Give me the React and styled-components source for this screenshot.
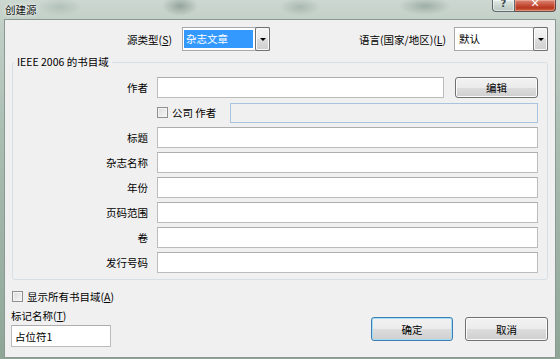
import React from 'react';
import styled, { createGlobalStyle, css } from 'styled-components';

const Global = createGlobalStyle`
  html, body { margin: 0; padding: 0; }
  body {
    font-family: "Noto Sans CJK SC", "Microsoft YaHei", sans-serif;
    font-size: 10.5px;
    color: #000;
  }
  * { box-sizing: border-box; }
`;

const Window = styled.div`
  width: 560px;
  height: 359px;
  display: flex;
  flex-direction: column;
  padding: 0 4px 1px 4px;
  overflow: hidden;
  background:
    radial-gradient(ellipse 22px 9px at 60px 7px, rgba(150, 170, 160, 0.45), transparent),
    radial-gradient(ellipse 18px 10px at 180px 6px, rgba(105, 125, 115, 0.55), transparent),
    radial-gradient(ellipse 20px 9px at 300px 7px, rgba(130, 150, 140, 0.45), transparent),
    radial-gradient(ellipse 26px 9px at 425px 6px, rgba(115, 135, 125, 0.5), transparent),
    linear-gradient(180deg, #ccd7d0 0%, #c2d0c7 6%, #a9bdb1 40%, #8fa697 100%);
`;

const TitleBar = styled.div`
  height: 19px;
  flex: none;
  display: flex;
  justify-content: space-between;
  align-items: flex-start;
`;

const Title = styled.div`
  padding-left: 1px;
  line-height: 19px;
  font-size: 10.5px;
  color: #111;
  text-shadow: 0 0 4px rgba(255, 255, 255, 0.9), 0 0 2px rgba(255, 255, 255, 0.8);
`;

const CaptionButtons = styled.div`
  display: flex;
`;

const CaptionButton = styled.div`
  height: 12px;
  display: flex;
  justify-content: center;
  overflow: hidden;
  border: 1px solid rgba(55, 65, 75, 0.75);
  border-top: none;
  font-family: "DejaVu Sans", sans-serif;
  font-weight: bold;
  line-height: 8px;
  ${p => p.$close ? css`
    width: 41px;
    border-left: none;
    border-radius: 0 0 4px 0;
    background: linear-gradient(180deg, #d98a79 0%, #c9503a 45%, #b83a22 70%, #d0643f 100%);
    color: #fff;
    font-size: 11px;
    box-shadow: inset 0 0 0 1px rgba(255, 200, 180, 0.45);
  ` : css`
    width: 23px;
    border-radius: 0 0 0 4px;
    background: linear-gradient(180deg, #e3ebe7 0%, #cbd7d1 50%, #b9c8c0 100%);
    color: #3b4a50;
    font-size: 10px;
    box-shadow: inset 0 0 0 1px rgba(255, 255, 255, 0.5);
  `}
`;

const Client = styled.div`
  flex: 1;
  display: flex;
  flex-direction: column;
  border: 1px solid #8a9793;
  background: #f0f0f0;
  padding-top: 7px;
`;

const TopRow = styled.div`
  display: flex;
  align-items: center;
  height: 24px;
  padding-right: 7px;
`;

const TopLabel = styled.div`
  text-align: right;
  white-space: nowrap;
  ${p => p.$grow ? css`flex: 1; margin-right: 8px;` : css`width: 167px; margin-right: 10px;`}
`;

const Combo = styled.div`
  width: ${p => p.$w}px;
  height: 24px;
  display: flex;
  padding: 1px;
  border: 1px solid #a7a9ad;
  background: #fff;
`;

const ComboText = styled.div`
  flex: 1;
  padding-left: 3px;
  line-height: 20px;
  ${p => p.$selected && css`
    background: #3399ff;
    color: #fff;
    margin: 1px 2px 1px 0;
    line-height: 18px;
    padding-left: 2px;
  `}
`;

const ComboArrow = styled.div`
  width: 15px;
  margin: -2px -2px -2px 0;
  border: 1px solid #707070;
  border-radius: 2px;
  background: linear-gradient(180deg, #f4f4f4 0%, #ebebeb 50%, #dddddd 50%, #cfcfcf 100%);
  box-shadow: inset 0 0 0 1px #fbfbfb;
  display: flex;
  align-items: center;
  justify-content: center;
  &::after {
    content: "";
    border-left: 3px solid transparent;
    border-right: 3px solid transparent;
    border-top: 3px solid #000;
  }
`;

const Group = styled.fieldset`
  margin: 3px 7px 0 7px;
  padding: 7px 9px 6px 0;
  border: 1px solid #d5dfe5;
  border-radius: 3px;
  min-width: 0;
`;

const Legend = styled.legend`
  padding: 0 3px;
  margin-left: 1px;
  line-height: 16px;
  font-size: 10.5px;
`;

const Fields = styled.div`
  display: grid;
  grid-template-columns: 144px 1fr 94px;
  grid-auto-rows: 21px;
  row-gap: 4px;
`;

const FieldLabel = styled.div`
  align-self: center;
  text-align: right;
  padding-right: 9px;
`;

const TextInput = styled.input`
  height: ${p => p.$h || 21}px;
  width: ${p => (p.$w ? `${p.$w}px` : '100%')};
  margin: 0;
  padding: 0 3px;
  font: inherit;
  color: #000;
  border: 1px solid #bcbcbc;
  border-top-color: #adadad;
  background: #fff;
  outline: none;
  ${p => p.disabled && css`
    background: #f0f0f0;
    border-color: #a9c4de;
  `}
`;

const SpanRow = styled.div`
  grid-column: 2 / 4;
  display: flex;
  align-items: center;
`;

const Check = styled.span`
  flex: none;
  width: 11px;
  height: 11px;
  border: 1px solid #8e8f8f;
  background: linear-gradient(135deg, #dcdcdc 0%, #f6f6f6 100%);
  box-shadow: inset 0 0 0 1px #f4f4f4;
`;

const CheckText = styled.span`
  margin-left: 4px;
  white-space: nowrap;
`;

const CompanyInput = styled(TextInput)`
  flex: 1;
  width: auto;
  height: 20px;
  margin-left: 14px;
`;

const Button = styled.button`
  width: ${p => p.$w || 82}px;
  height: ${p => p.$h || 24}px;
  margin: 0;
  padding: 0;
  font: inherit;
  color: #000;
  border: 1px solid #707070;
  border-radius: 3px;
  background: linear-gradient(180deg, #f2f2f2 0%, #ebebeb 50%, #dddddd 50%, #cfcfcf 100%);
  box-shadow: inset 0 0 0 1px #fcfcfc;
  ${p => p.$default && css`
    border-color: #3c7fb1;
    box-shadow: inset 0 0 0 1px #a6dcf6;
  `}
`;

const EditButton = styled(Button)`
  justify-self: end;
`;

const Footer = styled.div`
  flex: 1;
  display: flex;
  justify-content: space-between;
  align-items: flex-end;
  padding: 6px 7px 10px 6px;
`;

const FooterLeft = styled.div`
  display: flex;
  flex-direction: column;
`;

const CheckRow = styled.div`
  display: flex;
  align-items: center;
  height: 14px;
  margin-left: 1px;
`;

const TagLabel = styled.div`
  margin-top: 5px;
  line-height: 16px;
`;

const TagInput = styled(TextInput)`
  margin-top: 1px;
`;

const ButtonBar = styled.div`
  display: flex;
  gap: 12px;
  margin-bottom: 6px;
`;

const fields = ['标题', '杂志名称', '年份', '页码范围', '卷', '发行号码'];

export default function App() {
  return (
    <>
      <Global />
      <Window>
        <TitleBar>
          <Title>创建源</Title>
          <CaptionButtons>
            <CaptionButton>?</CaptionButton>
            <CaptionButton $close>✕</CaptionButton>
          </CaptionButtons>
        </TitleBar>
        <Client>
          <TopRow>
            <TopLabel>源类型(<u>S</u>)</TopLabel>
            <Combo $w={88}>
              <ComboText $selected>杂志文章</ComboText>
              <ComboArrow />
            </Combo>
            <TopLabel $grow>语言(国家/地区)(<u>L</u>)</TopLabel>
            <Combo $w={94}>
              <ComboText>默认</ComboText>
              <ComboArrow />
            </Combo>
          </TopRow>
          <Group>
            <Legend>IEEE 2006 的书目域</Legend>
            <Fields>
              <FieldLabel>作者</FieldLabel>
              <TextInput />
              <EditButton $w={83} $h={21}>编辑</EditButton>
              <div />
              <SpanRow>
                <Check />
                <CheckText>公司 作者</CheckText>
                <CompanyInput disabled />
              </SpanRow>
              {fields.map(f => (
                <React.Fragment key={f}>
                  <FieldLabel>{f}</FieldLabel>
                  <SpanRow><TextInput /></SpanRow>
                </React.Fragment>
              ))}
            </Fields>
          </Group>
          <Footer>
            <FooterLeft>
              <CheckRow>
                <Check />
                <CheckText>显示所有书目域(<u>A</u>)</CheckText>
              </CheckRow>
              <TagLabel>标记名称(<u>T</u>)</TagLabel>
              <TagInput $w={100} $h={22} defaultValue="占位符1" />
            </FooterLeft>
            <ButtonBar>
              <Button $default>确定</Button>
              <Button $w={83}>取消</Button>
            </ButtonBar>
          </Footer>
        </Client>
      </Window>
    </>
  );
}
